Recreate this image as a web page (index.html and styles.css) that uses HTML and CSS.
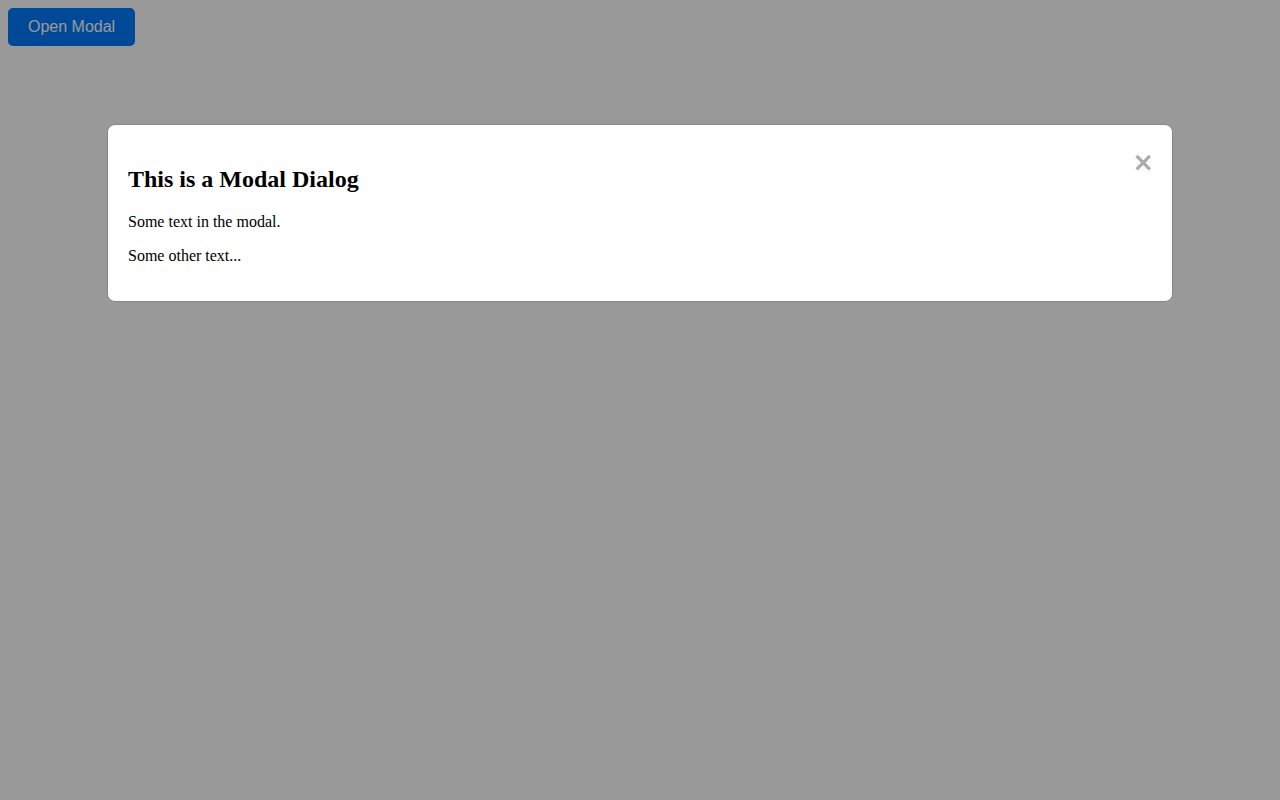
FILE: index.html
```html
<!DOCTYPE html>
<html>
<head>
<meta charset="utf-8">
<title>Modal</title>
<link rel="stylesheet" href="styles.css">
</head>
<body>
<button class="open-btn">Open Modal</button>
<div class="modal">
  <div class="modal-content">
    <span class="close">&times;</span>
    <h2 class="modal-title">This is a Modal Dialog</h2>
    <p class="modal-text">Some text in the modal.</p>
    <p class="modal-text">Some other text...</p>
  </div>
</div>
</body>
</html>
```

FILE: styles.css
```css
html, body {
  margin: 0;
  padding: 0;
}
body {
  padding: 8px;
  font-family: "Liberation Serif", "Times New Roman", serif;
  background: #ffffff;
}
.open-btn {
  display: block;
  background: #007bff;
  color: #ffffff;
  border: none;
  border-radius: 5px;
  padding: 10px 20px;
  font-family: "Liberation Sans", Arial, sans-serif;
  font-size: 16px;
  line-height: 18px;
  cursor: pointer;
}
.modal {
  position: fixed;
  top: 0;
  left: 0;
  width: 100%;
  height: 100%;
  background: rgba(0, 0, 0, 0.4);
  padding-top: 124px;
  box-sizing: border-box;
}
.modal-content {
  background: #ffffff;
  width: 80%;
  margin: 0 auto;
  padding: 20px;
  border: 1px solid #888888;
  border-radius: 8px;
}
.close {
  float: right;
  margin-right: -2px;
  color: #aaaaaa;
  font-family: "DejaVu Sans", sans-serif;
  font-size: 26px;
  line-height: 35px;
  font-weight: bold;
  cursor: pointer;
}
.modal-title {
  font-size: 24px;
  font-weight: bold;
  margin: 21px 0 20px;
}
.modal-text {
  font-size: 16px;
  margin: 16px 0;
}
```
